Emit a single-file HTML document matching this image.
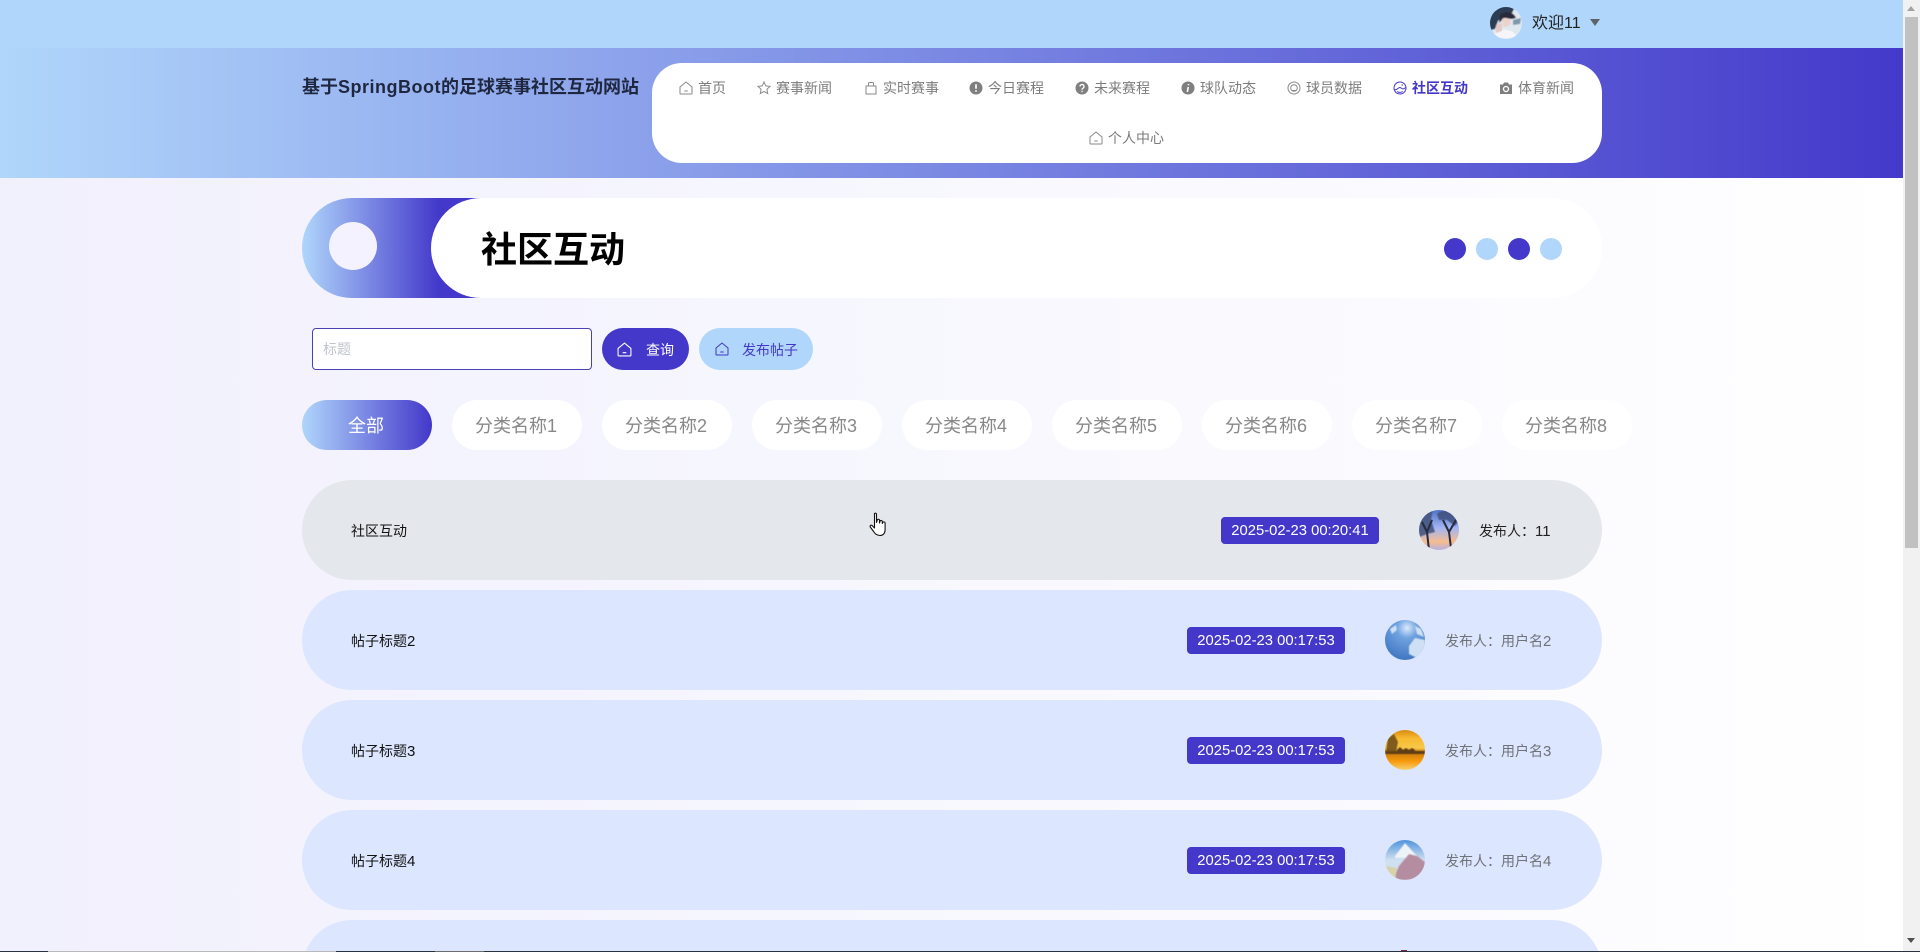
<!DOCTYPE html>
<html lang="zh-CN"><head><meta charset="utf-8"><title>社区互动</title>
<style>
html,body{margin:0;padding:0;width:1920px;height:952px;overflow:hidden}
body{position:relative;background:linear-gradient(90deg,#f1f0fd 0,#f7f7fe 900px,#fdfdff 1700px,#fff 1903px);font-family:"Liberation Sans","Noto Sans CJK SC",sans-serif;font-size:14px;color:#333}
.a,.t,svg.i{position:absolute}
.t{white-space:nowrap;line-height:20px}
.n{color:#7c7c7c;font-size:14px}
svg.i{width:14px;height:14px;fill:none;stroke:#8a8a8a;stroke-width:1}
.c{position:absolute;top:400px;width:130px;height:50px;line-height:52px;border-radius:25px;background:#fff;color:#888;font-size:18px;text-align:center;white-space:nowrap;text-indent:-2px}
.r{position:absolute;left:302px;width:1300px;height:100px;border-radius:50px;background:#dce6fe}
.d{position:absolute;top:238px;width:22px;height:22px;border-radius:50%}
.tag{position:absolute;top:37px;width:158px;height:27px;line-height:28px;background:#4338ca;color:#fff;border-radius:4px;text-align:center;font-size:14.8px;white-space:nowrap}
.av{position:absolute;top:30px;width:40px;height:40px}
.rt{position:absolute;left:49px;top:41px;line-height:20px;color:#111;white-space:nowrap}
.rt b{font-weight:400;font-size:15px}
.by{position:absolute;top:41px;line-height:20px;color:#6f7278;white-space:nowrap}
.by b{font-weight:400;font-size:15px}
</style></head><body>
<div class="a" style="left:0;top:0;width:1920px;height:48px;background:#b0d6fb"></div>
<div class="a" style="left:0;top:48px;width:1920px;height:130px;background:linear-gradient(90deg,#b0d6fb,#4338ca)"></div>

<svg class="a" style="left:1490px;top:7px" width="32" height="32" viewBox="0 0 32 32"><defs><clipPath id="c0"><circle cx="16" cy="16" r="16"/></clipPath><filter id="b"><feGaussianBlur stdDeviation=".5"/></filter></defs><g clip-path="url(#c0)"><g filter="url(#b)"><rect width="32" height="32" fill="#dfe8ef"/><path d="M-2 -2H26L22 6 14 8 8 14 5 22 -2 24Z" fill="#2b3d55"/><path d="M10 8C15 3 24 5 26 11L22 12 14 11 9 16Z" fill="#2a2c3e"/><path d="M12 12C15 10 20 11 21 15 20 19 16 21 13 19Z" fill="#edd2cc"/><path d="M2 32C3 25 10 22 17 23 24 24 27 28 27 32Z" fill="#f6f6fa"/><path d="M6 18L12 16 12 24 6 26Z" fill="#e6c9c8"/><path d="M23 13L31 11 30 17 23 18Z" fill="#7f97aa"/></g></g></svg>
<div class="t" style="left:1532px;top:14px;font-size:16px;color:#222">欢迎11</div>
<svg class="a" style="left:1590px;top:19px" width="10" height="7"><path d="M0 0H10L5 7Z" fill="#5f6368"/></svg>

<div class="t" style="left:302px;top:75px;font-size:18px;line-height:24px;font-weight:700;color:#1f2740">基于<span style="letter-spacing:.5px">SpringBoot</span>的足球赛事社区互动网站</div>

<div class="a" style="left:652px;top:63px;width:950px;height:100px;background:#fff;border-radius:30px"></div>
<svg class="i" style="left:679px;top:81px" viewBox="0 0 14 14"><path d="M1 6L7 1l6 5v6.500a.5.5 0 0 1-.5.5h-11a.5.5 0 0 1-.5-.5zM5.300 10h3.400"/></svg><div class="t n" style="left:698px;top:78px">首页</div>
<svg class="i" style="left:757px;top:81px" viewBox="0 0 14 14"><path d="M7 1l1.800 3.900 4.200.5-3.100 2.900.8 4.200L7 10.400l-3.700 2.100.8-4.200L1 5.400l4.200-.5z"/></svg><div class="t n" style="left:776px;top:78px">赛事新闻</div>
<svg class="i" style="left:864px;top:81px" viewBox="0 0 14 14"><path d="M2 5h10v8H2zM4.500 5V2.500a1 1 0 0 1 1-1h3a1 1 0 0 1 1 1V5"/></svg><div class="t n" style="left:883px;top:78px">实时赛事</div>
<svg class="i" style="left:969px;top:81px" viewBox="0 0 14 14"><circle cx="7" cy="7" r="6.500" fill="#7f7f7f" stroke="none"/><path d="M7 3.200v4.600M7 9.300v1.500" stroke="#fff" stroke-width="1.700"/></svg><div class="t n" style="left:988px;top:78px">今日赛程</div>
<svg class="i" style="left:1075px;top:81px" viewBox="0 0 14 14"><circle cx="7" cy="7" r="6.500" fill="#7f7f7f" stroke="none"/><path d="M5 5.500a2 2 0 1 1 3 1.700c-.7.4-1 .8-1 1.500M7 9.800v1.300" stroke="#fff" stroke-width="1.300"/></svg><div class="t n" style="left:1094px;top:78px">未来赛程</div>
<svg class="i" style="left:1181px;top:81px" viewBox="0 0 14 14"><circle cx="7" cy="7" r="6.500" fill="#7f7f7f" stroke="none"/><path d="M7.500 3v1.300M7.200 6L6.400 11" stroke="#fff" stroke-width="1.600"/></svg><div class="t n" style="left:1200px;top:78px">球队动态</div>
<svg class="i" style="left:1287px;top:81px" viewBox="0 0 14 14"><circle cx="7" cy="7" r="6"/><circle cx="7" cy="7" r="3.300"/><path d="M5 9.500h4"/></svg><div class="t n" style="left:1306px;top:78px">球员数据</div>
<svg class="i" style="left:1393px;top:81px;stroke:#4338ca" viewBox="0 0 14 14"><circle cx="7" cy="7" r="6"/><path d="M1.500 8.500C4 10 5 6 7 6.500s2.500 3 5.500 0M8.500 4h1.500M4.200 10.500c1.800 1.200 3.600 1.200 5.600 0"/></svg><div class="t n" style="left:1412px;top:78px;color:#4338ca;font-weight:700">社区互动</div>
<svg class="i" style="left:1499px;top:81px" viewBox="0 0 14 14"><path d="M1 3.500h3L5 1.500h4l1 2h3V13H1z" fill="#7f7f7f" stroke="none"/><circle cx="7" cy="8" r="2.500" stroke="#fff" stroke-width="1.300"/></svg><div class="t n" style="left:1518px;top:78px">体育新闻</div>
<svg class="i" style="left:1089px;top:131px" viewBox="0 0 14 14"><path d="M1 6L7 1l6 5v6.500a.5.5 0 0 1-.5.5h-11a.5.5 0 0 1-.5-.5zM5.300 10h3.400"/></svg><div class="t n" style="left:1108px;top:128px">个人中心</div>

<div class="a" style="left:302px;top:198px;width:180px;height:100px;border-radius:50px 0 0 50px;background:linear-gradient(90deg,#b0d6fb,#4338ca 76%)"></div>
<div class="a" style="left:329px;top:222px;width:48px;height:48px;border-radius:50%;background:#f3f2fe"></div>
<div class="a" style="left:431px;top:198px;width:1171px;height:100px;border-radius:50px;background:#fff"></div>
<div class="t" style="left:481px;top:225px;font-size:36px;line-height:50px;font-weight:700;color:#000">社区互动</div>
<div class="d" style="left:1444px;background:#4338ca"></div><div class="d" style="left:1476px;background:#b0d6fb"></div><div class="d" style="left:1508px;background:#4338ca"></div><div class="d" style="left:1540px;background:#b0d6fb"></div>

<div class="a" style="left:312px;top:328px;width:278px;height:40px;border:1px solid #4a42b8;border-radius:4px;background:#fff"></div>
<div class="t" style="left:323px;top:339px;color:#c0c4cc">标题</div>
<div class="a" style="left:602px;top:328px;width:87px;height:42px;border-radius:21px;background:#4338ca"></div>
<svg class="i" style="left:617px;top:342px;width:15px;height:15px;stroke:#fff" viewBox="0 0 14 14"><path d="M1 6L7 1l6 5v6.500a.5.5 0 0 1-.5.5h-11a.5.5 0 0 1-.5-.5zM5.300 10h3.400"/></svg>
<div class="t" style="left:646px;top:340px;color:#fff">查询</div>
<div class="a" style="left:699px;top:328px;width:114px;height:42px;border-radius:21px;background:#b0d6fb"></div>
<svg class="i" style="left:715px;top:342px;stroke:#4338ca" viewBox="0 0 14 14"><path d="M1 6L7 1l6 5v6.500a.5.5 0 0 1-.5.5h-11a.5.5 0 0 1-.5-.5zM5.300 10h3.400"/></svg>
<div class="t" style="left:742px;top:340px;color:#4338ca">发布帖子</div>

<div class="c" style="left:302px;color:#fff;background:linear-gradient(90deg,#b0d6fb,#4338ca)">全部</div>
<div class="c" style="left:452px">分类名称1</div>
<div class="c" style="left:602px">分类名称2</div>
<div class="c" style="left:752px">分类名称3</div>
<div class="c" style="left:902px">分类名称4</div>
<div class="c" style="left:1052px">分类名称5</div>
<div class="c" style="left:1202px">分类名称6</div>
<div class="c" style="left:1352px">分类名称7</div>
<div class="c" style="left:1502px">分类名称8</div>

<div class="r" style="top:480px;background:#e4e7ec">
<div class="rt">社区互动</div><div class="tag" style="left:919px">2025-02-23 00:20:41</div>
<svg class="av" style="left:1117px" viewBox="0 0 40 40"><defs><clipPath id="c1"><circle cx="20" cy="20" r="20"/></clipPath><linearGradient id="g1" x1="0" y1="0" x2="0" y2="1"><stop offset="0" stop-color="#4f73c8"/><stop offset=".45" stop-color="#a4b4f4"/><stop offset=".8" stop-color="#f6bd8e"/><stop offset="1" stop-color="#b5b0e6"/></linearGradient></defs><g clip-path="url(#c1)"><rect width="40" height="40" fill="url(#g1)"/><g filter="url(#b)"><path d="M-2 -2H14L12 10 16 22 8 24 -2 28Z" fill="#45557f" opacity=".9"/><path d="M18 4C24 -2 36 0 42 8L36 16 28 10 20 10Z" fill="#3f4f7d" opacity=".85"/></g><path d="M32 38L30 22M30 22L24 10M30 22L37 10M10 40L8 22M8 22L3 12M8 22L13 10" stroke="#262c3c" stroke-width="2" fill="none"/></g></svg>
<div class="by" style="left:1177px;color:#222">发布人：<b>11</b></div></div>

<div class="r" style="top:590px">
<div class="rt">帖子标题<b>2</b></div><div class="tag" style="left:885px">2025-02-23 00:17:53</div>
<svg class="av" style="left:1083px" viewBox="0 0 40 40"><defs><radialGradient id="g2" cx=".55" cy=".2" r=".85"><stop offset="0" stop-color="#dceafb"/><stop offset=".3" stop-color="#6fa2e0"/><stop offset="1" stop-color="#3d73bf"/></radialGradient></defs><circle cx="20" cy="20" r="20" fill="url(#g2)"/><g clip-path="url(#c1)"><g filter="url(#b)"><path d="M24 26l6-8 10 2v10l-8 8-8-4zM30 6l6 3 3 8-7-3zM5 9l6-4 1 5-5 4z" fill="#cfe0f4"/></g></g></svg>
<div class="by" style="left:1143px">发布人：用户名<b>2</b></div></div>

<div class="r" style="top:700px">
<div class="rt">帖子标题<b>3</b></div><div class="tag" style="left:885px">2025-02-23 00:17:53</div>
<svg class="av" style="left:1083px" viewBox="0 0 40 40"><defs><linearGradient id="g3" x1="0" y1="0" x2="0" y2="1"><stop offset="0" stop-color="#d98a10"/><stop offset=".2" stop-color="#f5b92e"/><stop offset=".45" stop-color="#f9c84a"/><stop offset=".55" stop-color="#c8780c"/><stop offset=".78" stop-color="#f79a0c"/><stop offset="1" stop-color="#f6d26e"/></linearGradient></defs><g clip-path="url(#c1)"><rect width="40" height="40" fill="url(#g3)"/><g filter="url(#b)"><path d="M0 21H40V24H0Z" fill="#5f3d14"/><path d="M1 22L3 8 9 4 13 12 11 22Z" fill="#6a4a18" opacity=".85"/><path d="M12 20l3-3 3 3 3-2 3 2 3-2 3 2v2H12Z" fill="#5f3d14"/></g></g></svg>
<div class="by" style="left:1143px">发布人：用户名<b>3</b></div></div>

<div class="r" style="top:810px">
<div class="rt">帖子标题<b>4</b></div><div class="tag" style="left:885px">2025-02-23 00:17:53</div>
<svg class="av" style="left:1083px" viewBox="0 0 40 40"><defs><linearGradient id="g4" x1="0" y1="0" x2="0" y2="1"><stop offset="0" stop-color="#4f93de"/><stop offset=".5" stop-color="#cfe0f0"/></linearGradient></defs><g clip-path="url(#c1)"><rect width="40" height="40" fill="url(#g4)"/><g filter="url(#b)"><path d="M10 16L20 3 30 14 34 18H10Z" fill="#eef3f8"/><path d="M8 40L14 26 24 14 32 16 40 22V40Z" fill="#b58da0"/><path d="M0 26L12 28 10 40H0Z" fill="#d8d2a8"/></g></g></svg>
<div class="by" style="left:1143px">发布人：用户名<b>4</b></div></div>

<div class="a" style="left:302px;top:920px;width:1300px;height:32px;overflow:hidden"><div style="position:absolute;left:0;top:0;width:1300px;height:100px;border-radius:50px;background:#dce6fe"></div><div class="a" style="left:1099px;top:30px;width:6px;height:2px;background:#7a2a45"></div></div>

<svg class="a" style="left:869px;top:512px" width="19" height="25" viewBox="0 0 19 25"><path d="M5.500 1.500C6.500.8 7.500 1.300 7.500 2.500V10.500L8.500 7.500c1.200-.6 2 0 2 1V11l.8-2.400c1.200-.5 2 .1 2 1.100v1.800l.8-1.500c1.200-.4 2 .2 2 1.200V18c0 3.200-2.200 5.500-5 5.500-3.500 0-5-1.700-6.500-4L1.300 15c-.7-1.200.8-2.400 2-1.300L5.500 16z" fill="#fff" stroke="#111" stroke-width="1.100" stroke-linejoin="round"/></svg>

<div class="a" style="left:1903px;top:0;width:17px;height:952px;background:#f1f1f1"></div>
<div class="a" style="left:1905px;top:17px;width:13px;height:531px;background:#c1c1c1"></div>
<svg class="a" style="left:1907px;top:6px" width="9" height="6"><path d="M0 5H8L4 0Z" fill="#a3a3a3"/></svg>
<svg class="a" style="left:1907px;top:938px" width="9" height="6"><path d="M0 0H8L4 5Z" fill="#505050"/></svg>
<div class="a" style="left:0;top:951px;width:1920px;height:1px;background:#27313f"></div>
<div class="a" style="left:48px;top:951px;width:288px;height:1px;background:#b9b9b9"></div>
<div class="a" style="left:435px;top:951px;width:49px;height:1px;background:#6c6c6c"></div>
</body></html>
